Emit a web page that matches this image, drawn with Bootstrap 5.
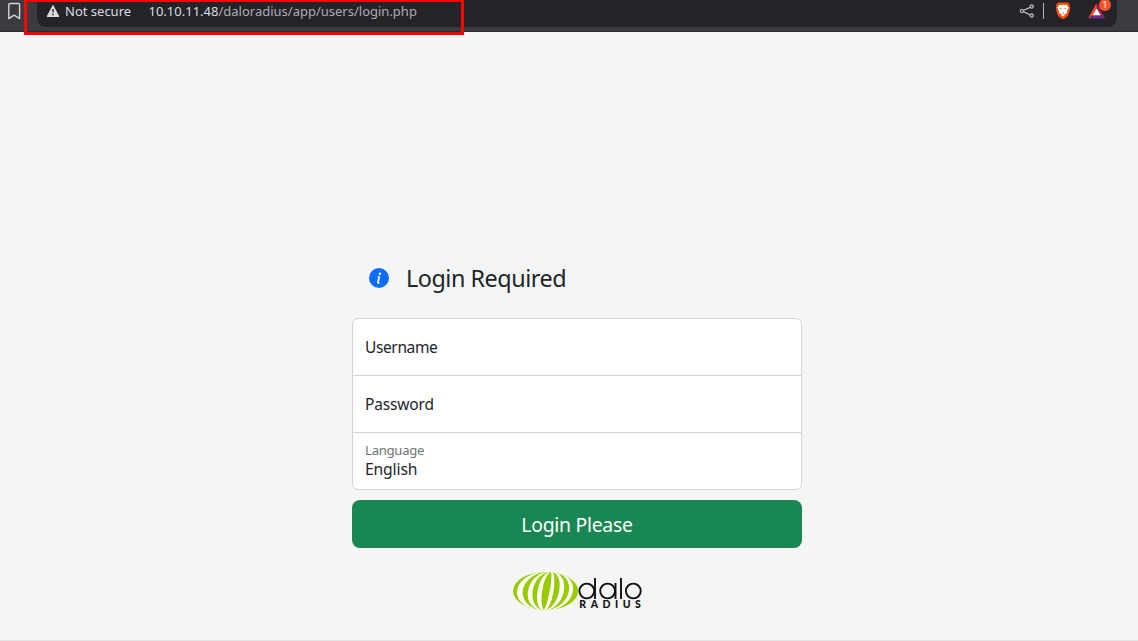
<!DOCTYPE html>
<html lang="en">
<head>
<meta charset="utf-8">
<meta name="viewport" content="width=device-width, initial-scale=1">
<title>daloRADIUS login</title>
<link rel="stylesheet" href="https://cdn.jsdelivr.net/npm/bootstrap@5.3.0/dist/css/bootstrap.min.css">
<style>
body{font-family:"Noto Sans",sans-serif;background:#f5f5f5;height:641px;overflow:hidden;border-bottom:1px solid #e3e3e3}
.toolbar{height:32px;background:#3b3a40;border-bottom:1px solid #2b2a2f}
.address{width:1080px;height:27px;margin-left:15px;background:#242328;border-radius:0 0 9px 9px;color:#dddce2;font-size:13px;line-height:23px}
.address .secure{margin-left:4px;width:83.5px}
.address .path{color:#adacb2}
.outline-box{left:24px;top:-1px;width:440px;height:36px;border:3px solid #f00}
.bar{width:1px;height:16px;background:#b5b4ba}
.login{width:450px;margin-left:352px;padding-top:229px}
.login h1{font-size:23.4px;letter-spacing:-.48px;line-height:34px;margin:0 0 23px 17px;gap:17px;font-weight:400;color:#212529}
.login .form-floating>.form-control,.login .form-floating>.form-select{height:58px;line-height:1.25;border-color:#ced4da;background-color:#fff;background-image:none;color:#212529;font-size:15.7px;letter-spacing:-.15px}
.login .form-floating>.form-select{padding-top:27px;padding-bottom:9px}
.login .form-floating>label{color:#212529;opacity:1;font-size:15.5px;letter-spacing:-.38px;line-height:25px}
.login .form-floating>.form-select~label{color:#212529;opacity:.65}
.login .form-floating>label::after{display:none}
.login .form-floating+.form-floating{margin-top:-1px}
.login .first{border-radius:6px 6px 0 0}
.login .middle{border-radius:0}
.login .middle~label{letter-spacing:-.15px!important}
.login .last{border-radius:0 0 6px 6px}
.login .btn{height:48px;margin-top:10px;background:#198754;font-size:19.4px;letter-spacing:-.28px}
.login .btn span{position:relative;top:1px}
</style>
</head>
<body>
<header class="toolbar d-flex align-items-start position-relative">
  <svg class="ms-2 flex-shrink-0" width="14" height="23" viewBox="0 0 14 23" fill="none" stroke="#d6d5db" stroke-width="1.4" stroke-linejoin="round"><path d="M.8 4.7Q.8 3.5 2 3.5h8.4q1.2 0 1.2 1.2v13.9l-5.4-3.4-5.4 3.4z"/></svg>
  <div class="address d-flex">
    <svg class="flex-shrink-0" style="margin-left:9px" width="15" height="23" viewBox="0 0 15 23"><path d="M7 5.5 12.8 16.5H1.2z" fill="#dddce2" stroke="#dddce2" stroke-linejoin="round"/><path d="M7 9v3.2M7 13.5v1.7" stroke="#242328" stroke-width="1.4"/></svg>
    <span class="secure">Not secure</span>
    <span class="url">10.10.11.48<span class="path">/daloradius/app/users/login.php</span></span>
    <div class="ms-auto d-flex" style="margin-right:5px">
      <svg width="16" height="23" viewBox="0 0 16 23" fill="none" stroke="#b5b4ba" stroke-width="1.3"><circle cx="2.9" cy="11" r="1.6"/><circle cx="12.7" cy="6.6" r="1.6"/><circle cx="12.7" cy="15.6" r="1.6"/><path d="m4.4 10.3 6.8-3M4.4 11.7l6.8 3.2"/></svg>
      <span class="bar" style="margin:3px 11px 0 8px"></span>
      <svg width="17" height="23" viewBox="0.5 0 17 23"><path d="m4 2.2 1.5.4h6l1.5-.4 2.5 2.6-.4 1.5.9 1.4-2 7q-.4 1.6-5.5 4.9-5.1-3.3-5.5-4.9l-2-7 .9-1.4-.4-1.5z" fill="#fb4a0a"/><path d="m5 4.7 2 .4 1.5-.4 1.5.4 2-.4 2.2 2.7-1.8 4 .4 1.4-2.8 1.6v1l-1.5 1.2L7 15.4v-1l-2.8-1.6.4-1.4-1.8-4z" fill="#fff"/><path d="m4.6 7.8 2.6.7-.6 1zM12.4 7.8l-2.6.7.6 1zM7.2 12.3l1.3.7 1.3-.7M7 14.2l1.5-.6 1.5.6" fill="#fb4a0a"/></svg>
      <svg style="margin-left:16px" width="24" height="23" viewBox="0 0 24 23"><path d="M8.7 3 0 18.4l5.5-3.3L8.7 9z" fill="#ff4724"/><path d="m8.7 3 8.7 15.4-5.2-3.3L8.7 9z" fill="#9e1f63"/><path d="M0 18.4h17.4l-5.2-3.4H5.5z" fill="#662d91"/><path d="m8.7 8.5 4 6.7h-8z" fill="#fff"/><circle cx="17" cy="5" r="6" fill="#fb542b"/><text x="17" y="8.4" text-anchor="middle" font-family="Noto Sans,sans-serif" font-size="8.5" fill="#fff">1</text></svg>
    </div>
  </div>
  <div class="outline-box position-absolute"></div>
</header>
<main class="login">
  <h1 class="d-flex align-items-center">
    <svg width="20" height="20" viewBox="0 0 16 16" fill="#fff"><circle cx="8" cy="8" r="8" fill="#0d6efd"/><path d="m8.93 6.588-2.29.287-.082.38.45.083c.294.07.352.176.288.469l-.738 3.468c-.194.897.105 1.319.808 1.319.545 0 1.178-.252 1.465-.598l.088-.416c-.2.176-.492.246-.686.246-.275 0-.375-.193-.304-.533z"/><circle cx="8.7" cy="4.5" r="1"/></svg>
    <span>Login Required</span>
  </h1>
  <form>
    <div class="form-floating"><input class="form-control first" id="username" placeholder="Username"><label for="username">Username</label></div>
    <div class="form-floating"><input type="password" class="form-control middle" id="password" placeholder="Password"><label for="password">Password</label></div>
    <div class="form-floating"><select class="form-select last" id="language"><option>English</option></select><label for="language">Language</label></div>
    <button class="btn btn-success btn-lg w-100 border-0 py-0" type="button"><span>Login Please</span></button>
  </form>
  <svg class="d-block" style="margin:23px 0 0 160px" width="132" height="42" viewBox="0 0 132 42">
    <defs><clipPath id="globe"><ellipse cx="33.6" cy="20" rx="32.6" ry="19"/></clipPath></defs>
    <ellipse cx="33.6" cy="20" rx="32.6" ry="19" fill="#9c0"/>
    <g fill="#fff" clip-path="url(#globe)">
      <path d="M29 1C0 6-4 32 24 39H27C3 33 6 6 32 1z"/>
      <path d="M34 1C13 6 9 34 28 39H30C15 34 18 6 36 1z"/>
      <path d="M37 1C25 6 21 34 30 39H32C27 34 30 6 38.5 1z"/>
      <path d="M39 1C41 6 36 34 32 39H34C41 34 45 6 40.5 1z"/>
      <path d="M41 1C53 6 48 34 34 39H36C54 34 58 6 43 1z"/>
      <path d="M43 1C65 6 60 34 37 39H40C65 34 69 6 45 1z"/>
    </g>
    <g fill="none" stroke="#111" stroke-width="1.9">
      <circle cx="74.8" cy="20" r="7.4"/><path d="M83 7v21"/>
      <circle cx="95.6" cy="20" r="7.4"/><path d="M103.5 12v16M109 7v21"/>
      <circle cx="121.3" cy="20" r="7.4"/>
    </g>
    <text x="67.3" y="37" textLength="61.5" font-family="Lato,sans-serif" font-size="10.5" font-weight="900" fill="#111">RADIUS</text>
  </svg>
</main>
<script src="https://cdn.jsdelivr.net/npm/bootstrap@5.3.0/dist/js/bootstrap.bundle.min.js"></script>
</body>
</html>
